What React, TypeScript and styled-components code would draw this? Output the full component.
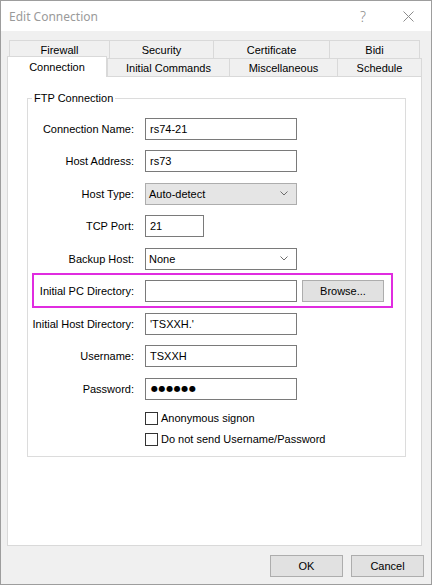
import React from "react";
import styled, { createGlobalStyle } from "styled-components";

const GlobalStyle = createGlobalStyle`
  html, body {
    margin: 0;
    padding: 0;
    background: #ffffff;
  }
  body {
    font-family: "Liberation Sans", Arial, sans-serif;
    font-size: 11px;
    color: #000;
  }
  * {
    box-sizing: border-box;
  }
`;

const Window = styled.div`
  width: 432px;
  height: 585px;
  display: flex;
  flex-direction: column;
  background: #f0f0f0;
  border: 1px solid #9d9d9d;
`;

const TitleBar = styled.div`
  height: 30px;
  display: flex;
  align-items: center;
  background: #ffffff;
  padding-left: 8px;
`;

const Title = styled.span`
  flex: 1;
  font-family: "Noto Sans", "Open Sans", sans-serif;
  font-size: 12px;
  color: #9a9a9a;
`;

const CaptionButton = styled.div<{ $w: number }>`
  width: ${({ $w }) => $w}px;
  height: 30px;
  display: flex;
  align-items: center;
  justify-content: center;
  color: #8c8c8c;
  font-family: "Noto Sans", sans-serif;
  font-size: 14px;
  font-weight: 300;
`;

const Body = styled.div`
  flex: 1;
  display: flex;
  flex-direction: column;
  padding: 9px 7px 0 6px;
`;

const TabStrip = styled.div`
  height: 36px;
  display: flex;
  flex-direction: column;
`;

const TabRow = styled.div<{ $offset: number }>`
  height: 18px;
  display: flex;
  align-items: flex-start;
  margin-left: ${({ $offset }) => $offset}px;
`;

const Tab = styled.div<{ $w: number; $active?: boolean; $last?: boolean }>`
  width: ${({ $w }) => $w}px;
  height: ${({ $active }) => ($active ? 21 : 18)}px;
  margin-top: ${({ $active }) => ($active ? -2 : 0)}px;
  position: ${({ $active }) => ($active ? "relative" : "static")};
  z-index: ${({ $active }) => ($active ? 1 : 0)};
  display: flex;
  align-items: center;
  justify-content: center;
  padding-bottom: ${({ $active }) => ($active ? 1 : 0)}px;
  background: ${({ $active }) => ($active ? "#ffffff" : "#f0f0f0")};
  border-top: 1px solid #d9d9d9;
  border-left: 1px solid #d9d9d9;
  border-right: ${({ $last, $active }) => ($last || $active ? "1px solid #d9d9d9" : "none")};
  white-space: nowrap;
`;

const Panel = styled.div`
  width: 415px;
  height: 470px;
  background: #ffffff;
  border: 1px solid #d9d9d9;
  padding: 14px 0 0 19px;
`;

const Group = styled.fieldset`
  width: 379px;
  margin: 0;
  padding: 13px 0 10px 4px;
  border: 1px solid #dcdcdc;
  min-width: 0;
`;

const Legend = styled.legend`
  padding: 0 2px;
  line-height: 14px;
`;

const Form = styled.div`
  display: flex;
  flex-direction: column;
  gap: 10.4px;
`;

const Row = styled.div`
  display: flex;
  align-items: center;
  gap: 11px;
  height: 22px;
`;

const Highlight = styled.div`
  width: 361px;
  height: 35px;
  margin: -6.5px 0 -6px 0;
  display: flex;
  align-items: center;
  border: 2px solid #e02ce0;
  padding-top: 1px;
`;

const Label = styled.div<{ $w?: number }>`
  width: ${({ $w }) => $w ?? 102}px;
  text-align: right;
  white-space: nowrap;
  flex-shrink: 0;
`;

const Field = styled.div<{ $w?: number }>`
  width: ${({ $w }) => $w ?? 152}px;
  height: 22px;
  border: 1px solid #7a7a7a;
  background: #ffffff;
  display: flex;
  align-items: center;
  padding-left: 4px;
  white-space: nowrap;
  flex-shrink: 0;
`;

const Dots = styled.span`
  font-family: "DejaVu Sans", sans-serif;
  font-size: 8px;
  letter-spacing: 0.6px;
  padding-left: 1px;
`;

const Combo = styled.div<{ $flat?: boolean }>`
  width: 152px;
  height: 22px;
  display: flex;
  align-items: center;
  padding: 0 8px 0 3px;
  background: ${({ $flat }) => ($flat ? "#e5e5e5" : "#ffffff")};
  border: 1px solid ${({ $flat }) => ($flat ? "#adadad" : "#7a7a7a")};
  flex-shrink: 0;
`;

const ComboText = styled.span`
  flex: 1;
`;

const Button = styled.div<{ $w: number }>`
  width: ${({ $w }) => $w}px;
  height: 22px;
  display: flex;
  align-items: center;
  justify-content: center;
  background: #e1e1e1;
  border: 1px solid #adadad;
  flex-shrink: 0;
`;

const BrowseButton = styled(Button)`
  margin-left: 5px;
`;

const Checks = styled.div`
  display: flex;
  flex-direction: column;
  gap: 8px;
  margin: 12px 0 0 113px;
`;

const CheckRow = styled.label`
  display: flex;
  align-items: center;
  gap: 3px;
  height: 13px;
`;

const Box = styled.span`
  width: 13px;
  height: 13px;
  border: 1px solid #333333;
  background: #ffffff;
`;

const Footer = styled.div`
  display: flex;
  justify-content: flex-end;
  gap: 8px;
  padding-top: 9px;
`;

const Chevron = () => (
  <svg width="8" height="5" viewBox="0 0 8 5">
    <path d="M0.5 0.5 L4 4 L7.5 0.5" fill="none" stroke="#6d6d6d" strokeWidth="1" />
  </svg>
);

const CloseGlyph = () => (
  <svg width="11" height="11" viewBox="0 0 11 11">
    <path d="M0.5 0.5 L10.5 10.5 M10.5 0.5 L0.5 10.5" stroke="#8c8c8c" strokeWidth="1" />
  </svg>
);

const topTabs = [
  { title: "Firewall", w: 100 },
  { title: "Security", w: 104 },
  { title: "Certificate", w: 116 },
  { title: "Bidi", w: 91 },
];

const bottomTabs = [
  { title: "Connection", w: 100 },
  { title: "Initial Commands", w: 122 },
  { title: "Miscellaneous", w: 108 },
  { title: "Schedule", w: 85 },
];

const App: React.FC = () => {
  return (
    <>
      <GlobalStyle />
      <Window>
        <TitleBar>
          <Title>Edit Connection</Title>
          <CaptionButton $w={44}>?</CaptionButton>
          <CaptionButton $w={46}>
            <CloseGlyph />
          </CaptionButton>
        </TitleBar>
        <Body>
          <TabStrip>
            <TabRow $offset={2}>
              {topTabs.map((t, i) => (
                <Tab key={t.title} $w={t.w} $last={i === topTabs.length - 1}>
                  {t.title}
                </Tab>
              ))}
            </TabRow>
            <TabRow $offset={0}>
              {bottomTabs.map((t, i) => (
                <Tab
                  key={t.title}
                  $w={t.w}
                  $active={i === 0}
                  $last={i === bottomTabs.length - 1}
                >
                  {t.title}
                </Tab>
              ))}
            </TabRow>
          </TabStrip>
          <Panel>
            <Group>
              <Legend>FTP Connection</Legend>
              <Form>
                <Row>
                  <Label>Connection Name:</Label>
                  <Field>rs74-21</Field>
                </Row>
                <Row>
                  <Label>Host Address:</Label>
                  <Field>rs73</Field>
                </Row>
                <Row>
                  <Label>Host Type:</Label>
                  <Combo $flat>
                    <ComboText>Auto-detect</ComboText>
                    <Chevron />
                  </Combo>
                </Row>
                <Row>
                  <Label>TCP Port:</Label>
                  <Field $w={59}>21</Field>
                </Row>
                <Row>
                  <Label>Backup Host:</Label>
                  <Combo>
                    <ComboText>None</ComboText>
                    <Chevron />
                  </Combo>
                </Row>
                <Highlight>
                  <Label $w={100}>Initial PC Directory:</Label>
                  <Field style={{ marginLeft: 11 }} />
                  <BrowseButton $w={82}>Browse...</BrowseButton>
                </Highlight>
                <Row>
                  <Label>Initial Host Directory:</Label>
                  <Field>'TSXXH.'</Field>
                </Row>
                <Row>
                  <Label>Username:</Label>
                  <Field>TSXXH</Field>
                </Row>
                <Row>
                  <Label>Password:</Label>
                  <Field>
                    <Dots>●●●●●●</Dots>
                  </Field>
                </Row>
              </Form>
              <Checks>
                <CheckRow>
                  <Box />
                  Anonymous signon
                </CheckRow>
                <CheckRow>
                  <Box />
                  Do not send Username/Password
                </CheckRow>
              </Checks>
            </Group>
          </Panel>
          <Footer>
            <Button $w={73}>OK</Button>
            <Button $w={73}>Cancel</Button>
          </Footer>
        </Body>
      </Window>
    </>
  );
};

export default App;
